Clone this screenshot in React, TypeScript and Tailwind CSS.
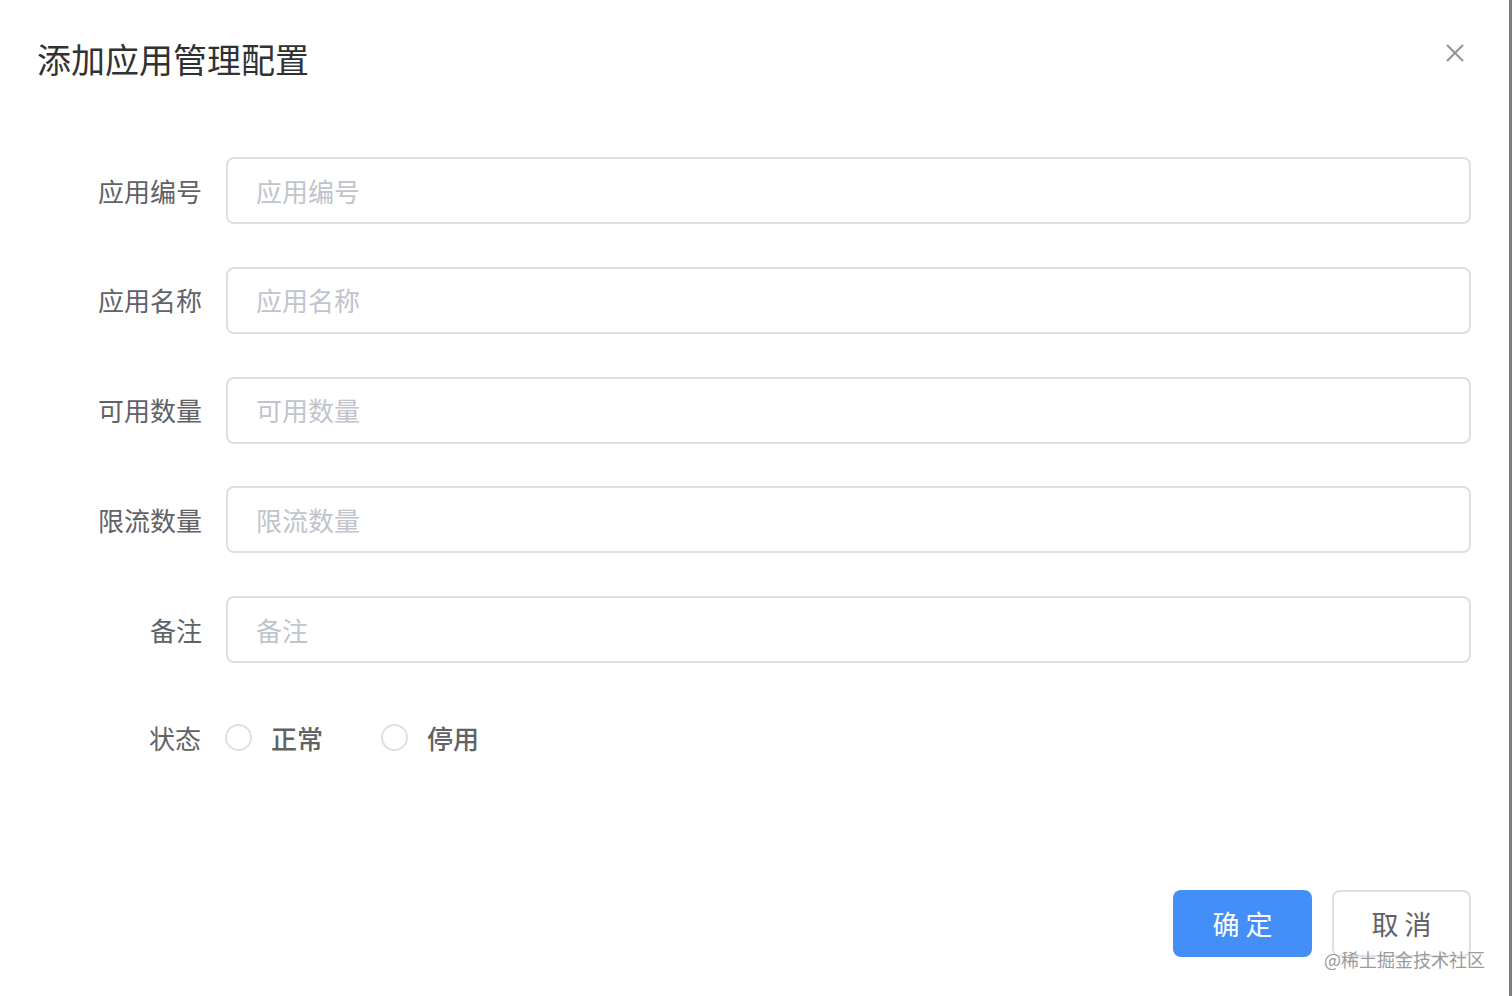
import React from "react";

const font = { fontFamily: '"Noto Sans CJK SC", "Noto Sans", sans-serif' };

function Row({ label }: { label: string }) {
  return (
    <div className="flex items-center mb-[42.75px]">
      <div className="w-[186px] pr-[24px] text-right text-[26px] text-[#606266] leading-none">{label}</div>
      <div className="flex-1 h-[67px] border-2 border-[#dcdfe6] rounded-[8px] flex items-center pl-[28px] text-[26px] text-[#c0c4cc] leading-none">
        {label}
      </div>
    </div>
  );
}

function Radio({ label }: { label: string }) {
  return (
    <div className="flex items-center mr-[58px]">
      <div className="w-[27px] h-[27px] rounded-full border-2 border-[#dcdfe6] bg-white" />
      <span className="ml-[19px] text-[26px] font-medium text-[#606266] leading-none">{label}</span>
    </div>
  );
}

export default function App() {
  return (
    <div className="w-[1512px] h-[996px] bg-white relative overflow-hidden border-r-[3px] border-[#7d7d7d]" style={font}>
      <div className="flex items-start justify-between pl-[37px] pr-[45px] pt-[40px]">
        <div className="text-[34px] leading-[38px] text-[#303133]">添加应用管理配置</div>
        <svg className="mt-[4px]" width="18" height="18" viewBox="0 0 18 18" fill="none" stroke="#909399" strokeWidth="2">
          <path d="M1 1 L17 17 M17 1 L1 17" />
        </svg>
      </div>
      <div className="pl-[40px] pr-[38px] pt-[79px]">
        <Row label="应用编号" />
        <Row label="应用名称" />
        <Row label="可用数量" />
        <Row label="限流数量" />
        <Row label="备注" />
        <div className="flex items-center h-[64px]">
          <div className="w-[185px] pr-[24px] text-right text-[26px] text-[#606266] leading-none">状态</div>
          <Radio label="正常" />
          <Radio label="停用" />
        </div>
      </div>
      <div className="absolute right-[38px] top-[890px] flex gap-[20px]">
        <button className="w-[139px] h-[67px] rounded-[8px] bg-[#448ef7] text-white text-[27px] leading-none">确 定</button>
        <button className="w-[139px] h-[67px] rounded-[8px] border-2 border-[#dcdfe6] bg-white text-[#606266] text-[27px] leading-none">取 消</button>
      </div>
      <div className="absolute right-[24px] top-[946px] text-[18px] leading-[26px] text-[#9a9a9a]" style={{ textShadow: "0 0 2px #fff" }}>
        @稀土掘金技术社区
      </div>
    </div>
  );
}
